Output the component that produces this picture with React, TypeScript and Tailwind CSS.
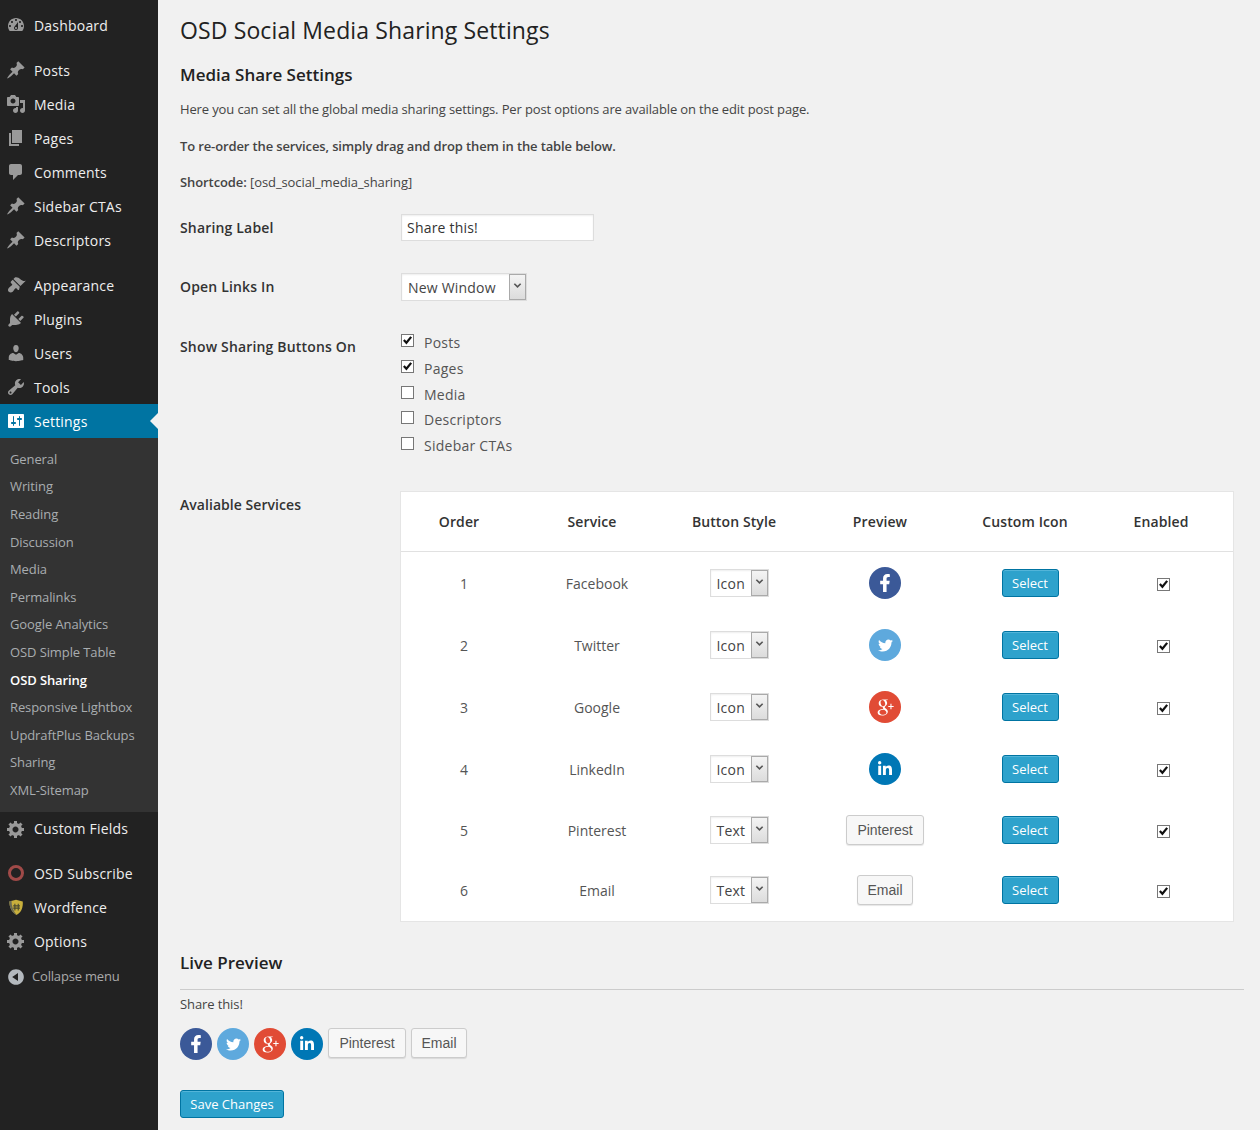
import { FaFacebookF, FaTwitter, FaLinkedinIn } from "react-icons/fa";
import { TiSocialGooglePlus } from "react-icons/ti";

const paths = {
  dashboard: "M3.76 16h12.48c1.1-1.37 1.76-3.11 1.76-5 0-4.42-3.58-8-8-8s-8 3.58-8 8c0 1.89.66 3.63 1.76 5zM10 4c.55 0 1 .45 1 1s-.45 1-1 1-1-.45-1-1 .45-1 1-1zM6 6c.55 0 1 .45 1 1s-.45 1-1 1-1-.45-1-1 .45-1 1-1zm8 0c.55 0 1 .45 1 1s-.45 1-1 1-1-.45-1-1 .45-1 1-1zm-5.37 5.55L12 7v6c0 1.1-.9 2-2 2s-2-.9-2-2c0-.57.24-1.08.63-1.45zM4 10c.55 0 1 .45 1 1s-.45 1-1 1-1-.45-1-1 .45-1 1-1zm12 0c.55 0 1 .45 1 1s-.45 1-1 1-1-.45-1-1 .45-1 1-1zm-5 3c0-.55-.45-1-1-1s-1 .45-1 1 .45 1 1 1 1-.45 1-1z",
  pin: "M10.44 3.02l1.82-1.82 6.36 6.35-1.83 1.82c-1.05-.68-2.48-.57-3.41.36l-.75.75c-.92.93-1.04 2.35-.35 3.41l-1.83 1.82-2.41-2.41-2.8 2.79c-.42.42-3.38 2.71-3.8 2.29s1.86-3.39 2.28-3.81l2.79-2.79L4.1 9.36l1.83-1.82c1.05.69 2.48.57 3.4-.36l.75-.75c.93-.92 1.05-2.35.36-3.41z",
  media: "M13 11V4c0-.55-.45-1-1-1h-1.67L9 1H5L3.67 3H2c-.55 0-1 .45-1 1v7c0 .55.45 1 1 1h10c.55 0 1-.45 1-1zM7 4.5c1.38 0 2.5 1.12 2.5 2.5S8.38 9.5 7 9.5 4.5 8.38 4.5 7 5.62 4.5 7 4.5zM14 6h5v10.5c0 1.38-1.12 2.5-2.5 2.5S14 17.88 14 16.5s1.12-2.5 2.5-2.5c.17 0 .34.02.5.05V9h-3V6zm-4 8.05V13h2v3.5c0 1.38-1.12 2.5-2.5 2.5S7 17.88 7 16.5 8.12 14 9.5 14c.17 0 .34.02.5.05z",
  page: "M6 15V2h10v13H6zm-1 1h8v2H3V5h2v11z",
  comment: "M5 2h9c1.1 0 2 .9 2 2v7c0 1.1-.9 2-2 2h-2l-5 5v-5H5c-1.1 0-2-.9-2-2V4c0-1.1.9-2 2-2z",
  brush: "M14.48 11.06L7.41 3.99l1.5-1.5c.5-.56 2.3-.47 3.51.32 1.21.8 1.43 1.28 2.91 2.1 1.18.64 2.45 1.26 4.45.85zm-.71.71L6.7 4.7 4.93 6.47c-.39.39-.39 1.02 0 1.41l1.06 1.06c.39.39.39 1.03 0 1.42-.6.6-1.43 1.11-2.21 1.69-.35.26-.7.53-1.01.84-1.08 1.08-1.08 2.84 0 3.92s2.84 1.08 3.92 0c.31-.31.58-.66.84-1.01.58-.78 1.09-1.61 1.69-2.21.39-.39 1.02-.39 1.41 0l1.06 1.06c.39.39 1.02.39 1.41 0z",
  plug: "M13.11 4.36L9.87 7.6 8 5.73l3.24-3.24c.35-.34 1.05-.2 1.56.32.52.51.66 1.21.31 1.55zm-8 1.77l.91-1.12 9.01 9.01-1.19.84c-.71.71-2.63 1.16-3.82 1.16H6.14L4.9 17.26c-.59.59-1.54.59-2.12 0-.59-.58-.59-1.53 0-2.12l1.24-1.24v-3.88c0-1.13.4-3.19 1.09-3.89zm7.26 3.97l3.24-3.24c.34-.35 1.04-.21 1.55.31.52.51.66 1.21.31 1.55l-3.24 3.25z",
  user: "M10 9.25c-2.27 0-2.73-3.44-2.73-3.44C7 4.02 7.82 2 9.97 2c2.16 0 2.98 2.02 2.71 3.81 0 0-.41 3.44-2.68 3.44zm0 2.57L12.72 10c2.39 0 4.52 2.33 4.52 4.53v2.49s-3.65 1.13-7.24 1.13c-3.65 0-7.24-1.13-7.24-1.13v-2.49c0-2.25 1.94-4.48 4.47-4.48z",
  tools: "M16.68 9.77c-1.34 1.34-3.3 1.67-4.95.99l-5.41 6.52c-.99.99-2.59.99-3.58 0s-.99-2.59 0-3.57l6.52-5.42c-.68-1.65-.35-3.61.99-4.95 1.28-1.28 3.12-1.62 4.72-1.06l-2.89 2.89 2.82 2.82 2.86-2.87c.53 1.58.18 3.39-1.08 4.65zM3.81 16.21c.4.39 1.04.39 1.43 0 .4-.4.4-1.04 0-1.43-.39-.4-1.03-.4-1.43 0-.39.39-.39 1.03 0 1.43z",
  settings: "M18 16V4c0-.55-.45-1-1-1H3c-.55 0-1 .45-1 1v12c0 .55.45 1 1 1h14c.55 0 1-.45 1-1zM8 11h1c.55 0 1 .45 1 1s-.45 1-1 1H8v1.5c0 .28-.22.5-.5.5s-.5-.22-.5-.5V13H6c-.55 0-1-.45-1-1s.45-1 1-1h1V5.5c0-.28.22-.5.5-.5s.5.22.5.5V11zm5-2h-1c-.55 0-1-.45-1-1s.45-1 1-1h1V5.5c0-.28.22-.5.5-.5s.5.22.5.5V7h1c.55 0 1 .45 1 1s-.45 1-1 1h-1v5.5c0 .28-.22.5-.5.5s-.5-.22-.5-.5V9z",
  gear: "M18 12h-2.18c-.17.7-.44 1.35-.81 1.93l1.54 1.54-2.1 2.1-1.54-1.54c-.58.36-1.23.63-1.91.79V19H8v-2.18c-.68-.16-1.33-.43-1.91-.79l-1.54 1.54-2.12-2.12 1.54-1.54c-.36-.58-.63-1.23-.79-1.91H1V9.03h2.17c.16-.7.44-1.35.8-1.94L2.43 5.55l2.1-2.1 1.54 1.54c.58-.37 1.24-.64 1.93-.81V2h3v2.18c.68.16 1.33.43 1.91.79l1.54-1.54 2.12 2.12-1.54 1.54c.36.59.64 1.24.8 1.94H18V12zm-8.5 1.5c1.66 0 3-1.34 3-3s-1.34-3-3-3-3 1.34-3 3 1.34 3 3 3z",
  collapse: "M10 2.16c4.33 0 7.84 3.51 7.84 7.84s-3.51 7.84-7.84 7.84S2.16 14.33 2.16 10 5.71 2.16 10 2.16zm2 11.72V6.12L6.18 9.97z",
};

const MenuIcon = ({ d, white }: { d: string; white?: boolean }) => (
  <svg viewBox="0 0 20 20" className={`w-5 h-5 shrink-0 ${white ? "fill-white" : "fill-[#999]"}`}>
    <path d={d} />
  </svg>
);

const Item = ({ icon, label, short }: { icon: React.ReactNode; label: string; short?: boolean }) => (
  <div className={`${short ? "h-[33px]" : "h-[34px]"} flex items-center pl-[6px] text-[14px] tracking-[0.2px] text-[#eee]`}>
    <span className="w-5 h-5 flex items-center justify-center shrink-0">{icon}</span>
    <span className="ml-2">{label}</span>
  </div>
);

const submenu = [
  "General",
  "Writing",
  "Reading",
  "Discussion",
  "Media",
  "Permalinks",
  "Google Analytics",
  "OSD Simple Table",
  "OSD Sharing",
  "Responsive Lightbox",
  "UpdraftPlus Backups",
  "Sharing",
  "XML-Sitemap",
];

const Sidebar = () => (
  <div className="w-[158px] shrink-0 bg-[#222] pt-[8px]">
    <Item icon={<MenuIcon d={paths.dashboard} />} label="Dashboard" />
    <div className="h-[11px]" />
    <Item icon={<MenuIcon d={paths.pin} />} label="Posts" />
    <Item icon={<MenuIcon d={paths.media} />} label="Media" />
    <Item icon={<MenuIcon d={paths.page} />} label="Pages" />
    <Item icon={<MenuIcon d={paths.comment} />} label="Comments" />
    <Item icon={<MenuIcon d={paths.pin} />} label="Sidebar CTAs" />
    <Item icon={<MenuIcon d={paths.pin} />} label="Descriptors" />
    <div className="h-[11px]" />
    <Item icon={<MenuIcon d={paths.brush} />} label="Appearance" />
    <Item icon={<MenuIcon d={paths.plug} />} label="Plugins" />
    <Item icon={<MenuIcon d={paths.user} />} label="Users" />
    <Item icon={<MenuIcon d={paths.tools} />} label="Tools" />
    <div className="relative h-[34px] flex items-center pl-[6px] bg-[#0074a2] text-[14px] tracking-[0.2px] text-white">
      <MenuIcon d={paths.settings} white />
      <span className="ml-2">Settings</span>
      <span className="absolute right-0 top-[9px] border-y-[8px] border-r-[8px] border-y-transparent border-r-[#f1f1f1]" />
    </div>
    <div className="bg-[#333] h-[374px] pt-[7.8px]">
      {submenu.map((s) => (
        <div
          key={s}
          className={`h-[27.6px] flex items-center pl-[10px] text-[13px] tracking-[-0.1px] ${
            s === "OSD Sharing" ? "font-semibold text-white" : "text-[#a9adb0]"
          }`}
        >
          {s}
        </div>
      ))}
    </div>
    <Item short icon={<MenuIcon d={paths.gear} />} label="Custom Fields" />
    <div className="h-[11px]" />
    <Item
      icon={<span className="block w-4 h-4 rounded-full border-[3px] border-[#a04a48]" />}
      label="OSD Subscribe"
    />
    <Item
      icon={
        <svg viewBox="0 0 16 16" className="w-[18px] h-[18px]">
          <path d="M2 3l6-1.5L14 3c.4 5-1 9.500-5.500 12C4 12.500 2.200 8 2 3z" fill="#c9b03c" />
          <path d="M2 3l2-.5c0 4.500 1.500 9 4.500 12.500C4 12.500 2.200 8 2 3z" fill="#6b6b55" />
          <path d="M7 5v6M10 5v6M5.500 7h6M5.500 9h6" stroke="#4a4a30" strokeWidth="1" />
        </svg>
      }
      label="Wordfence"
    />
    <Item icon={<MenuIcon d={paths.gear} />} label="Options" />
    <div className="mt-[2px] h-[34px] flex items-center pl-[6px] text-[13px] tracking-[-0.18px] text-[#aaa]">
      <svg viewBox="0 0 20 20" className="w-5 h-5 shrink-0 fill-[#b4b9be]">
        <path d={paths.collapse} />
      </svg>
      <span className="ml-[6px]">Collapse menu</span>
    </div>
  </div>
);

const Check = ({ checked, className = "" }: { checked?: boolean; className?: string }) => (
  <span
    className={`relative block w-[13px] h-[13px] border border-[#777] bg-white shrink-0 ${className}`}
  >
    {checked && (
      <svg viewBox="0 0 12 12" className="absolute left-0 top-0 w-[11px] h-[11px]">
        <path d="M2 5.500l2.800 3L10 2" fill="none" stroke="#111" strokeWidth="2.400" />
      </svg>
    )}
  </span>
);

const FakeSelect = ({ value, width }: { value: string; width: string }) => (
  <div className={`flex h-[28px] ${width} bg-white border border-[#ddd] shadow-[inset_0_1px_2px_rgba(0,0,0,0.07)]`}>
    <span className="flex-1 pl-[6px] text-[14px] tracking-[0.2px] text-[#444] leading-[28px]">{value}</span>
    <span className="w-[17px] bg-gradient-to-b from-[#f4f4f4] to-[#dcdcdc] border border-[#aaa] flex items-center justify-center">
      <svg viewBox="0 0 10 10" className="w-[9px] h-[9px] -mt-[3px]">
        <path d="M1.500 3l3.500 3.500L8.500 3" fill="none" stroke="#555" strokeWidth="1.800" />
      </svg>
    </span>
  </div>
);

const Social = ({ name }: { name: string }) => {
  if (name === "facebook")
    return (
      <span className="w-8 h-8 rounded-full bg-[#3b5998] flex items-center justify-center text-white text-[18px]">
        <FaFacebookF />
      </span>
    );
  if (name === "twitter")
    return (
      <span className="w-8 h-8 rounded-full bg-[#5ea9dd] flex items-center justify-center text-white text-[15px]">
        <FaTwitter />
      </span>
    );
  if (name === "google")
    return (
      <span className="w-8 h-8 rounded-full bg-[#e14b35] flex items-center justify-center text-white text-[26px]">
        <TiSocialGooglePlus />
      </span>
    );
  return (
    <span className="w-8 h-8 rounded-full bg-[#0077b5] flex items-center justify-center text-white text-[16px]">
      <FaLinkedinIn />
    </span>
  );
};

const TextBtn = ({ label, width }: { label: string; width: string }) => (
  <span
    className={`${width} h-[30px] pt-px flex items-center justify-center rounded-[3px] bg-[#f7f7f7] border border-[#ccc] shadow-[0_1px_1px_rgba(0,0,0,0.1)] text-[14px] text-[#555] font-['Liberation_Sans',sans-serif]`}
  >
    {label}
  </span>
);

const services = [
  { n: 1, name: "Facebook", style: "Icon", preview: <Social name="facebook" />, h: "h-[62px]" },
  { n: 2, name: "Twitter", style: "Icon", preview: <Social name="twitter" />, h: "h-[62px]" },
  { n: 3, name: "Google", style: "Icon", preview: <Social name="google" />, h: "h-[62px]" },
  { n: 4, name: "LinkedIn", style: "Icon", preview: <Social name="linkedin" />, h: "h-[62px]" },
  { n: 5, name: "Pinterest", style: "Text", preview: <TextBtn label="Pinterest" width="w-[78px]" />, h: "h-[60px]" },
  { n: 6, name: "Email", style: "Text", preview: <TextBtn label="Email" width="w-[56px]" />, h: "h-[60px]" },
];

const ServicesTable = () => (
  <div className="-ml-px w-[834px] h-[431px] bg-white border border-[#e5e5e5]">
    <div className="h-[60px] pl-px grid grid-cols-[114px_152px_132px_160px_130px_142px] items-center border-b border-[#e1e1e1] text-[14px] tracking-[0.1px] font-semibold text-[#333] text-center">
      <span>Order</span>
      <span>Service</span>
      <span>Button Style</span>
      <span>Preview</span>
      <span>Custom Icon</span>
      <span>Enabled</span>
    </div>
    {services.map((s) => (
      <div
        key={s.n}
        className={`${s.h} pl-px grid grid-cols-[124px_142px_142px_150px_140px_126px] items-center justify-items-center text-[14px] text-[#555]`}
      >
        <span>{s.n}</span>
        <span>{s.name}</span>
        <FakeSelect value={s.style} width="w-[59px]" />
        {s.preview}
        <span className="w-[57px] h-[28px] pt-px rounded-[3px] bg-[#2ea2cc] border border-[#0074a2] shadow-[inset_0_1px_0_rgba(120,200,230,0.5)] text-white text-[13px] flex items-center justify-center">
          Select
        </span>
        <Check checked className="mt-[3px]" />
      </div>
    ))}
  </div>
);

const shows = [
  { label: "Posts", checked: true, h: "h-[25px]" },
  { label: "Pages", checked: true, h: "h-[26px]" },
  { label: "Media", h: "h-[26px]" },
  { label: "Descriptors", h: "h-[25px]" },
  { label: "Sidebar CTAs", h: "h-[26px]" },
];

export default function App() {
  return (
    <div className="flex h-[1130px] overflow-hidden bg-[#f1f1f1] font-['Open_Sans',sans-serif] text-[#444]">
      <Sidebar />
      <div className="flex-1 pl-[22px] pr-[16px] min-w-0">
        <h2 className="mt-[14px] text-[23px] tracking-[0.12px] leading-[32px] text-[#222]">OSD Social Media Sharing Settings</h2>
        <h3 className="mt-[17px] text-[17px] leading-[24px] font-semibold text-[#222]">Media Share Settings</h3>
        <p className="mt-[12px] text-[13px] tracking-[-0.13px] leading-[20px]">
          Here you can set all the global media sharing settings. Per post options are available on the edit post page.
        </p>
        <p className="mt-[17px] text-[13px] tracking-[-0.13px] leading-[20px] font-semibold">
          To re-order the services, simply drag and drop them in the table below.
        </p>
        <p className="mt-[16px] text-[13px] tracking-[-0.09px] leading-[20px]">
          <span className="font-semibold">Shortcode:</span> [osd_social_media_sharing]
        </p>

        <div className="mt-[22px] flex items-center h-[27px]">
          <span className="w-[221px] text-[14px] tracking-[0.17px] font-semibold text-[#333]">Sharing Label</span>
          <div className="w-[193px] h-[27px] bg-white border border-[#ddd] shadow-[inset_0_1px_2px_rgba(0,0,0,0.07)] pl-[5px] text-[14px] tracking-[0.2px] leading-[25px] text-[#333]">
            Share this!
          </div>
        </div>

        <div className="mt-[32px] flex items-center h-[28px]">
          <span className="w-[221px] -mt-[2px] text-[14px] tracking-[0.17px] font-semibold text-[#333]">Open Links In</span>
          <FakeSelect value="New Window" width="w-[126px]" />
        </div>

        <div className="mt-[29px] flex">
          <span className="w-[221px] mt-[7px] text-[14px] tracking-[0.17px] leading-[20px] font-semibold text-[#333]">Show Sharing Buttons On</span>
          <div className="flex flex-col">
            {shows.map((s) => (
              <div key={s.label} className={`${s.h} flex items-center text-[14px] tracking-[0.25px] text-[#555]`}>
                <Check checked={s.checked} className="-mt-[4px]" />
                <span className="ml-[10px]">{s.label}</span>
              </div>
            ))}
          </div>
        </div>

        <div className="mt-[33px] flex">
          <span className="w-[221px] mt-[4px] text-[14px] leading-[20px] tracking-[0.05px] font-semibold text-[#333]">Avaliable Services</span>
          <ServicesTable />
        </div>

        <h3 className="mt-[29px] text-[17px] leading-[24px] font-semibold text-[#222]">Live Preview</h3>
        <div className="mt-[14px] border-t border-[#ccc]" />
        <p className="mt-[4px] text-[13px] tracking-[-0.1px] leading-[20px]">Share this!</p>
        <div className="mt-[14px] flex gap-[5px]">
          <Social name="facebook" />
          <Social name="twitter" />
          <Social name="google" />
          <Social name="linkedin" />
          <TextBtn label="Pinterest" width="w-[78px]" />
          <TextBtn label="Email" width="w-[56px]" />
        </div>
        <div className="mt-[30px] w-[104px] h-[28px] pt-px rounded-[3px] bg-[#2ea2cc] border border-[#0074a2] shadow-[inset_0_1px_0_rgba(120,200,230,0.5)] text-white text-[13px] flex items-center justify-center">
          Save Changes
        </div>
      </div>
    </div>
  );
}
